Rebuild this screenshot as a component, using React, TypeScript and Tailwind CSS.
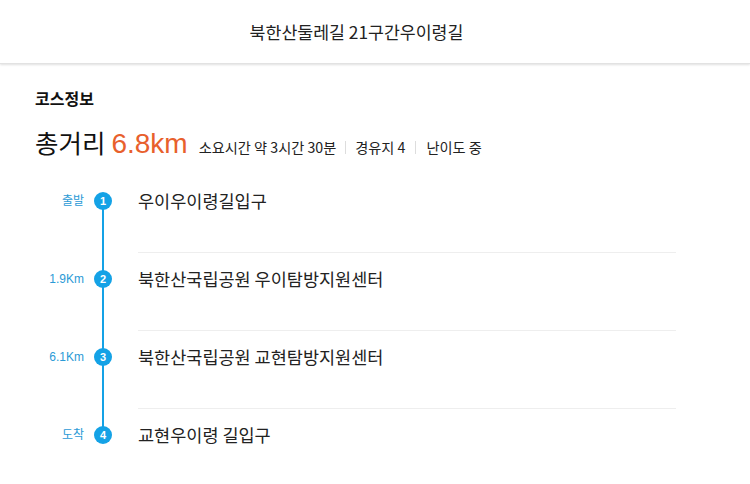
const font = { fontFamily: '"Noto Sans CJK KR", "Noto Sans", sans-serif' }

type Stop = { label: string; num: number; name: string }

const stops: Stop[] = [
  { label: '출발', num: 1, name: '우이우이령길입구' },
  { label: '1.9Km', num: 2, name: '북한산국립공원 우이탐방지원센터' },
  { label: '6.1Km', num: 3, name: '북한산국립공원 교현탐방지원센터' },
  { label: '도착', num: 4, name: '교현우이령 길입구' },
]

export default function App() {
  return (
    <div className="min-h-screen w-[750px] bg-white text-[#222]" style={font}>
      {/* header */}
      <header className="h-[64px] flex items-center justify-center pr-[37px] border-b border-[#e2e2e2] shadow-[0_1px_2px_rgba(0,0,0,0.12)]">
        <h1 className="text-[17.3px] leading-[24px] text-[#222]">북한산둘레길 21구간우이령길</h1>
      </header>

      <section className="pt-[24px]">
        <h2 className="pl-[35px] text-[16px] font-bold leading-[20px] text-[#111]">코스정보</h2>

        <div className="pl-[35px] mt-[19px] flex items-baseline h-[30px]">
          <span className="text-[25.5px] leading-[30px] text-[#111]">총거리</span>
          <span
            className="ml-[6px] text-[28px] leading-[30px] text-[#e8602c]"
            style={{ fontFamily: '"Liberation Sans", Arial, sans-serif' }}
          >
            6.8km
          </span>
          <div className="ml-[11px] flex items-center text-[14.2px] text-[#222]">
            <span>소요시간 약 3시간 30분</span>
            <span className="mx-[9px] h-[13px] w-px bg-[#ddd]" />
            <span>경유지 4</span>
            <span className="mx-[10px] h-[13px] w-px bg-[#ddd]" />
            <span>난이도 중</span>
          </div>
        </div>

        {/* timeline */}
        <div className="relative mt-[17px]">
          <div className="absolute left-[102px] top-[27px] h-[233px] w-[2px] bg-[#14a2e6]" />
          {stops.map((s, i) => (
            <div key={s.num} className="relative flex h-[78px]">
              <div className="flex h-[54px] items-center">
                <span
                  className="w-[84px] text-right text-[12px] text-[#2b9ad6]"
                  style={{ fontFamily: '"Liberation Sans", "Noto Sans CJK KR", sans-serif' }}
                >
                  {s.label}
                </span>
                <span
                  className="ml-[10px] flex h-[18px] w-[18px] items-center justify-center rounded-full bg-[#14a2e6] text-[11px] font-bold text-white"
                  style={{ fontFamily: '"Liberation Sans", Arial, sans-serif' }}
                >
                  {s.num}
                </span>
              </div>
              <div
                className={
                  'ml-[26px] w-[538px] ' + (i > 0 ? 'border-t border-[#eee] pt-[14px]' : 'pt-[15px]')
                }
              >
                <p className="text-[17.5px] leading-[24px] text-[#222]">{s.name}</p>
              </div>
            </div>
          ))}
        </div>
      </section>
    </div>
  )
}
